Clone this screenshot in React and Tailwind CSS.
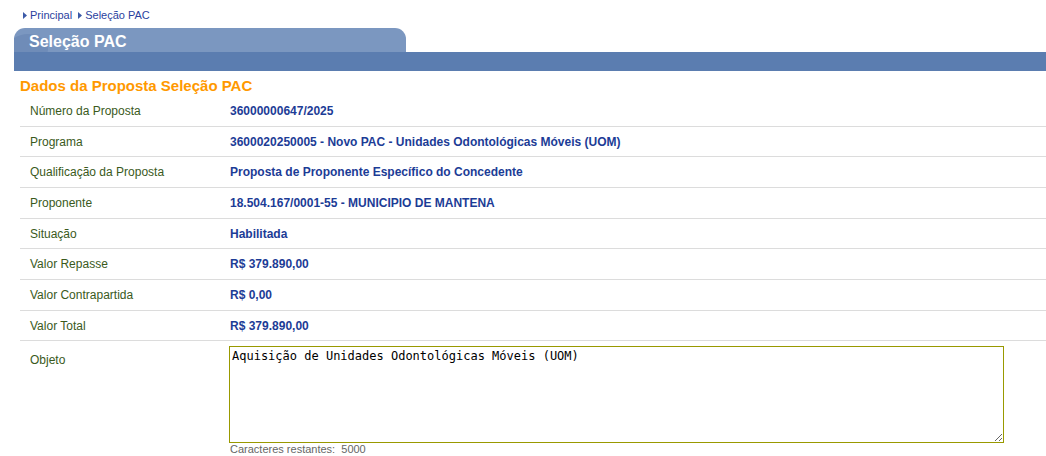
import React from 'react';

const rows = [
    ['Número da Proposta', '36000000647/2025', 'h-[31px]'],
    ['Programa', '3600020250005 - Novo PAC - Unidades Odontológicas Móveis (UOM)', 'h-[30px]'],
    ['Qualificação da Proposta', 'Proposta de Proponente Específico do Concedente', 'h-[31px]'],
    ['Proponente', '18.504.167/0001-55 - MUNICIPIO DE MANTENA', 'h-[31px]'],
    ['Situação', 'Habilitada', 'h-[30px]'],
    ['Valor Repasse', 'R$ 379.890,00', 'h-[31px]'],
    ['Valor Contrapartida', 'R$ 0,00', 'h-[31px]'],
    ['Valor Total', 'R$ 379.890,00', 'h-[30px]'],
];

function Crumb({ children }) {
    return (
        <span className="flex items-center gap-[3px]">
            <svg width="4" height="7" viewBox="0 0 4 7"><path d="M0 0 L4 3.5 L0 7 Z" fill="#3c5aa8" /></svg>
            <span className="text-[#2b3f9e]">{children}</span>
        </span>
    );
}

export default function App() {
    return (
        <div className="w-[1046px] h-[456px] bg-white overflow-hidden font-['Liberation_Sans',Arial,sans-serif]">
            <div className="flex gap-[6px] pl-[23px] pt-[2px] h-[28px] text-[11px] leading-[14px]">
                <Crumb>Principal</Crumb>
                <Crumb>Seleção PAC</Crumb>
            </div>

            <div className="pl-[14px]">
                <div className="relative w-[392px] h-[24px] rounded-t-[11px] bg-[#7b97c0] overflow-hidden">
                    <div className="absolute -left-[6px] top-[6px] w-[40px] h-[30px] rounded-[50%] bg-[#6f8cb8]" />
                    <div className="absolute inset-0 pl-[15px] pt-[4px] flex items-center text-[16px] font-bold text-white">Seleção PAC</div>
                </div>
                <div className="h-[19px] bg-[#5b7db0]" />
            </div>

            <div className="pl-[20px]">
                <h2 className="h-[25px] pt-[6px] text-[15px] leading-[18px] font-bold text-[#ff9900]">Dados da Proposta Seleção PAC</h2>
                {rows.map(([label, value, h]) => (
                    <div key={label} className={`flex items-center ${h} border-b border-[#dcdcdc] text-[12px]`}>
                        <div className="w-[210px] pl-[10px] text-[#3a5a1c]">{label}</div>
                        <div className="font-bold text-[#1c3c96]">{value}</div>
                    </div>
                ))}
                <div className="flex text-[12px]">
                    <div className="w-[209px] pl-[10px] pt-[10px] text-[#3a5a1c]">Objeto</div>
                    <div className="pt-[5px]">
                        <textarea
                            readOnly
                            defaultValue="Aquisição de Unidades Odontológicas Móveis (UOM)"
                            className="block w-[775px] h-[97px] border border-[#999900] px-[2px] py-[2px] text-[12px] leading-[15px] text-black font-['DejaVu_Sans_Mono',monospace] outline-none"
                        />
                        <div className="pl-[1px] text-[11px] leading-[13px] text-[#666]">Caracteres restantes:&nbsp; 5000</div>
                    </div>
                </div>
            </div>
        </div>
    );
}
